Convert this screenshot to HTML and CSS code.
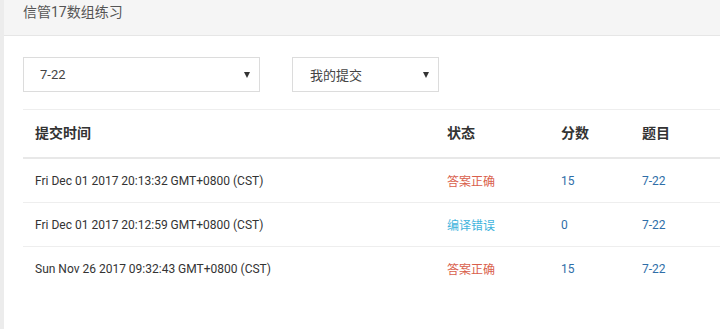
FILE: index.html
```html
<!doctype html>
<html lang="zh-CN">
  <head>
    <meta charset="UTF-8" />
    <meta name="viewport" content="width=device-width, initial-scale=1.0" />
    <title>信管17数组练习</title>
    <link rel="stylesheet" href="styles.css">
  </head>
  <body>
    <div class="panel">
      <div class="panel-heading">信管17数组练习</div>

      <div class="panel-body">
        <!-- Filters -->
        <div class="filters">
          <div class="select select-problem">
            <span>7-22</span>
            <span class="caret"></span>
          </div>
          <div class="select select-owner">
            <span>我的提交</span>
            <span class="caret"></span>
          </div>
        </div>

        <!-- Submissions -->
        <table class="submissions">
          <thead>
            <tr>
              <th class="col-time">提交时间</th>
              <th class="col-status">状态</th>
              <th class="col-score">分数</th>
              <th class="col-problem">题目</th>
            </tr>
          </thead>
          <tbody>
            <tr>
              <td>Fri Dec 01 2017 20:13:32 GMT+0800 (CST)</td>
              <td class="status-ok">答案正确</td>
              <td class="link">15</td>
              <td class="link">7-22</td>
            </tr>
            <tr>
              <td>Fri Dec 01 2017 20:12:59 GMT+0800 (CST)</td>
              <td class="status-ce">编译错误</td>
              <td class="link">0</td>
              <td class="link">7-22</td>
            </tr>
            <tr>
              <td>Sun Nov 26 2017 09:32:43 GMT+0800 (CST)</td>
              <td class="status-ok">答案正确</td>
              <td class="link">15</td>
              <td class="link">7-22</td>
            </tr>
          </tbody>
        </table>
      </div>
    </div>
  </body>
</html>
```

FILE: styles.css
```css
body {
  margin: 0;
  background: #ececec;
  font-family: Roboto, 'Noto Sans CJK SC', sans-serif;
  color: #333;
  overflow: hidden;
}

.panel {
  margin-left: 4px;
  min-height: 329px;
  background: #fff;
}

.panel-heading {
  height: 36px;
  line-height: 24px;
  padding-left: 19px;
  background: #f5f5f5;
  border-bottom: 1px solid #e6e6e6;
  font-size: 14px;
  color: #555;
  box-sizing: border-box;
}

.panel-body {
  padding: 21px 0 0 19px;
}

/* Filter selects */
.filters {
  display: flex;
  gap: 32px;
}

.select {
  display: flex;
  align-items: center;
  justify-content: space-between;
  height: 35px;
  padding: 0 9px 0 16px;
  border: 1px solid #dcdcdc;
  box-sizing: border-box;
  font-size: 13px;
  color: #444;
}

.select-problem {
  width: 237px;
}

.select-owner {
  width: 147px;
  padding-left: 17px;
}

.caret {
  width: 0;
  height: 0;
  border-left: 3px solid transparent;
  border-right: 3px solid transparent;
  border-top: 6px solid #333;
}

/* Submission table */
.submissions {
  margin-top: 17px;
  width: 100%;
  border-collapse: collapse;
  border-top: 1px solid #eee;
  table-layout: fixed;
}

.submissions th,
.submissions td {
  text-align: left;
  padding: 0 12px;
}

.submissions th {
  height: 44px;
  padding-bottom: 3px;
  font-size: 14px;
  font-weight: bold;
  color: #333;
  border-bottom: 2px solid #e8e8e8;
}

.submissions td {
  height: 43px;
  font-size: 12px;
  color: #333;
  border-bottom: 1px solid #eee;
}

.submissions tbody tr:last-child td {
  border-bottom: none;
}

.col-time {
  width: 388px;
}

.col-status {
  width: 90px;
}

.col-score {
  width: 57px;
}

.submissions .status-ok {
  color: #d9604c;
}

.submissions .status-ce {
  color: #3fb4dd;
}

.submissions .link {
  color: #2f6ea8;
}
```
